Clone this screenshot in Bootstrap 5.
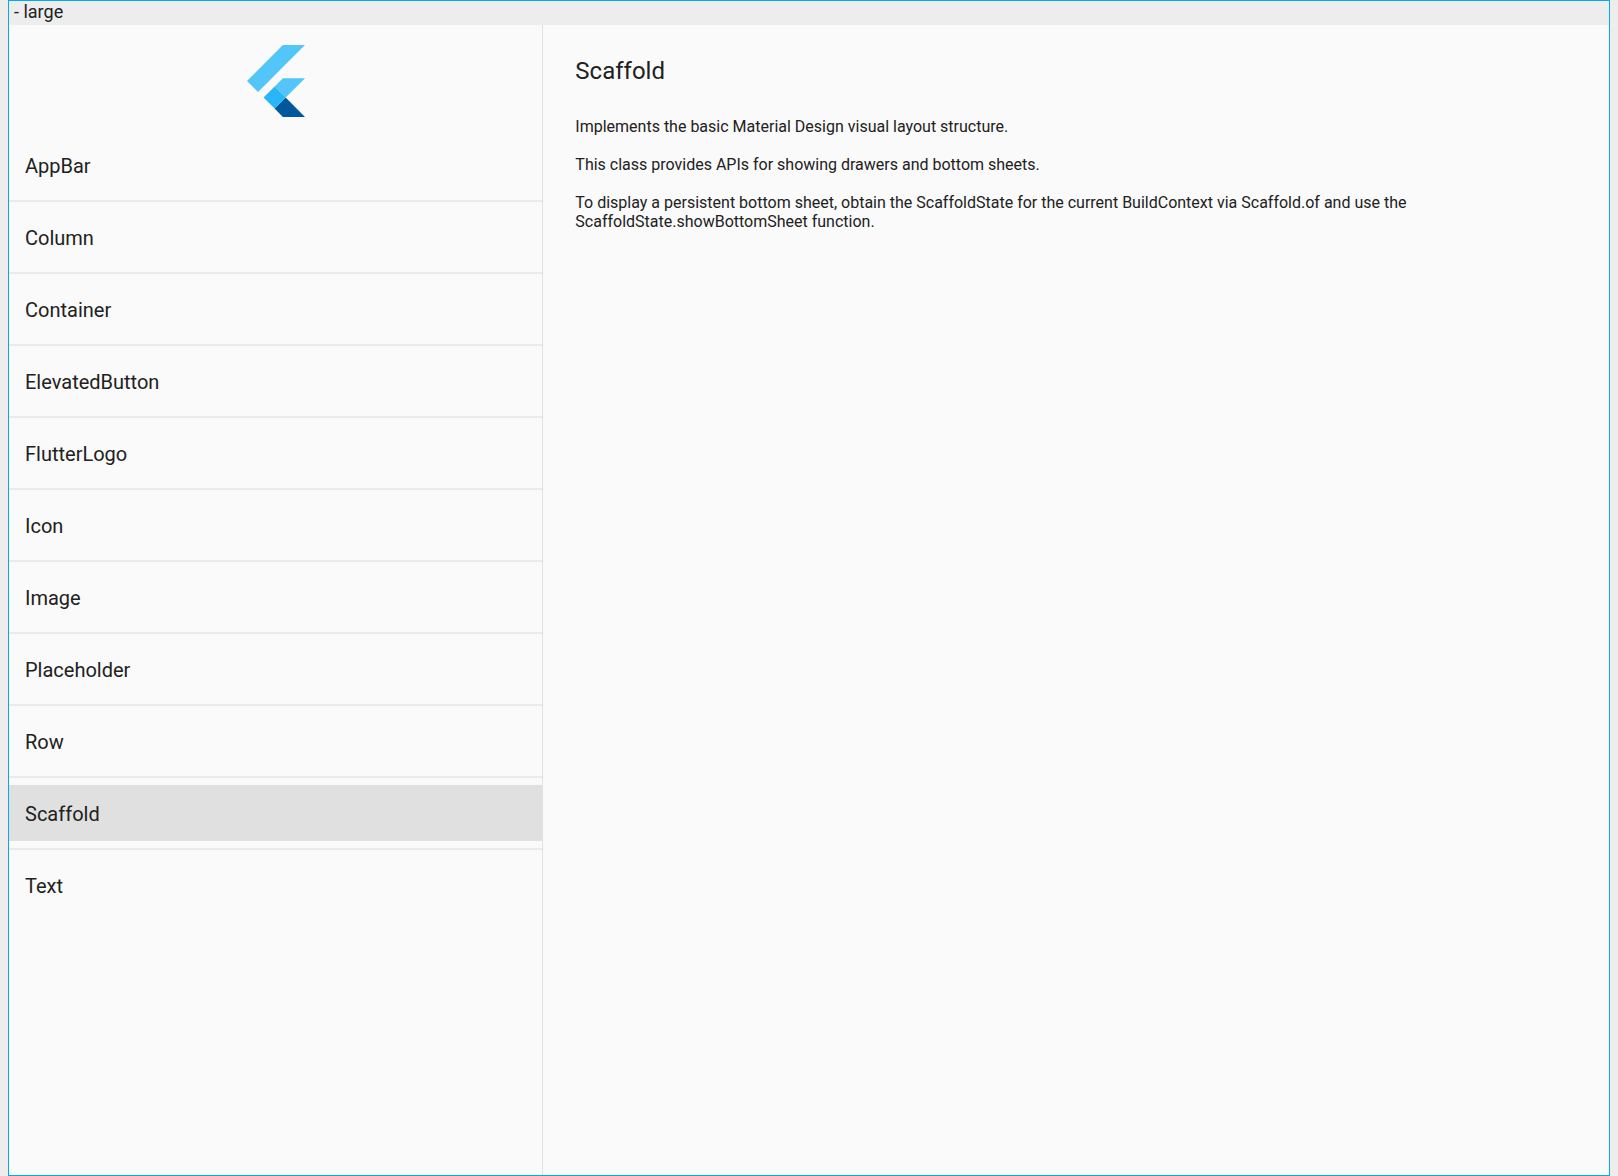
<!DOCTYPE html>
<html lang="en">
<head>
<meta charset="utf-8">
<meta name="viewport" content="width=device-width, initial-scale=1">
<title>Widgets</title>
<link href="https://cdn.jsdelivr.net/npm/bootstrap@5.3.0/dist/css/bootstrap.min.css" rel="stylesheet">
<style>
body { background: #ededed; color: #212121; font-family: Roboto, sans-serif; font-size: 16px; line-height: 19px; }
.app-frame { border: 1px solid #03a9f4; }
.size-label { font-size: 18px; line-height: 22px; padding: 0 5px 2px; }
.panes { background: #fafafa; }
.widget-list li + li { border-top: 2px solid #ebebeb; padding-top: 7px; }
.widget-list li { padding-bottom: 7px; }
.widget-link { height: 56px; padding: 2px 16px 0; font-size: 20px; line-height: 24px; color: #212121; }
.widget-link:hover { background: #eeeeee; }
.widget-link.selected { background: #e0e0e0; }
.detail { border-left: 1px solid #e0e0e0; padding: 32px; }
.detail-title { font-size: 24px; line-height: 28px; margin-bottom: 32px; }
.detail-text { margin-bottom: 19px; }
</style>
</head>
<body>
<div class="app-frame d-flex flex-column min-vh-100 mx-2">
  <header class="size-label">- large</header>
  <div class="panes row g-0 flex-grow-1">
    <nav class="col-4" aria-label="Widgets">
      <div class="d-flex justify-content-center py-3">
        <svg width="66" height="80" viewBox="0 0 166 202" role="img" aria-label="Flutter">
          <path fill="#54c5f8" d="M37.7 128.9 9.8 101 100.4 10.4h55.8z"/>
          <path fill="#54c5f8" d="M156.2 94h-55.8L79.5 114.9l27.9 27.9z"/>
          <path fill="#01579b" d="M79.5 170.7l20.9 20.9h55.8l-48.8-48.8z"/>
          <path fill="#29b6f6" d="M51.6 142.8l27.9-27.9 27.9 27.9-27.9 27.9z"/>
        </svg>
      </div>
      <ul class="widget-list list-unstyled mb-0">
        <li><a class="widget-link d-flex align-items-center text-decoration-none" href="#appbar">AppBar</a></li>
        <li><a class="widget-link d-flex align-items-center text-decoration-none" href="#column">Column</a></li>
        <li><a class="widget-link d-flex align-items-center text-decoration-none" href="#container">Container</a></li>
        <li><a class="widget-link d-flex align-items-center text-decoration-none" href="#elevatedbutton">ElevatedButton</a></li>
        <li><a class="widget-link d-flex align-items-center text-decoration-none" href="#flutterlogo">FlutterLogo</a></li>
        <li><a class="widget-link d-flex align-items-center text-decoration-none" href="#icon">Icon</a></li>
        <li><a class="widget-link d-flex align-items-center text-decoration-none" href="#image">Image</a></li>
        <li><a class="widget-link d-flex align-items-center text-decoration-none" href="#placeholder">Placeholder</a></li>
        <li><a class="widget-link d-flex align-items-center text-decoration-none" href="#row">Row</a></li>
        <li><a class="widget-link selected d-flex align-items-center text-decoration-none" href="#scaffold" aria-current="page">Scaffold</a></li>
        <li><a class="widget-link d-flex align-items-center text-decoration-none" href="#text">Text</a></li>
      </ul>
    </nav>
    <main class="detail col-8" id="scaffold">
      <h1 class="detail-title fw-normal">Scaffold</h1>
      <p class="detail-text">Implements the basic Material Design visual layout structure.</p>
      <p class="detail-text">This class provides APIs for showing drawers and bottom sheets.</p>
      <p class="detail-text">To display a persistent bottom sheet, obtain the ScaffoldState for the current BuildContext via Scaffold.of and use the<br>ScaffoldState.showBottomSheet function.</p>
    </main>
  </div>
</div>
<script src="https://cdn.jsdelivr.net/npm/bootstrap@5.3.0/dist/js/bootstrap.bundle.min.js"></script>
</body>
</html>
